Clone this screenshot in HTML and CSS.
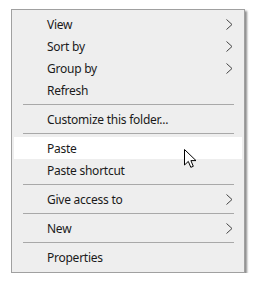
FILE: index.html
```html
<!DOCTYPE html>
<html lang="en">
<head>
    <meta charset="UTF-8">
    <title>Context menu</title>
    <link rel="stylesheet" href="styles.css">
</head>
<body>
    <div class="menu">
        <div class="item">View<svg class="chevron" width="7" height="11" viewBox="0 0 7 11"><polyline points="0.5,0.5 6,5.5 0.5,10.5"/></svg></div>
        <div class="item">Sort by<svg class="chevron" width="7" height="11" viewBox="0 0 7 11"><polyline points="0.5,0.5 6,5.5 0.5,10.5"/></svg></div>
        <div class="item">Group by<svg class="chevron" width="7" height="11" viewBox="0 0 7 11"><polyline points="0.5,0.5 6,5.5 0.5,10.5"/></svg></div>
        <div class="item">Refresh</div>
        <div class="sep"></div>
        <div class="item">Customize this folder...</div>
        <div class="sep"></div>
        <div class="item hover">Paste</div>
        <div class="item">Paste shortcut</div>
        <div class="sep"></div>
        <div class="item">Give access to<svg class="chevron" width="7" height="11" viewBox="0 0 7 11"><polyline points="0.5,0.5 6,5.5 0.5,10.5"/></svg></div>
        <div class="sep"></div>
        <div class="item">New<svg class="chevron" width="7" height="11" viewBox="0 0 7 11"><polyline points="0.5,0.5 6,5.5 0.5,10.5"/></svg></div>
        <div class="sep"></div>
        <div class="item">Properties</div>

        <!-- mouse pointer over "Paste" -->
        <svg class="cursor" width="14" height="20" viewBox="0 0 14 20">
            <path d="M0.5 0.5 L0.5 16 L4.3 12.4 L6.8 18.3 L9.3 17.3 L6.9 11.6 L12 11.6 Z"/>
        </svg>
    </div>
</body>
</html>
```

FILE: styles.css
```css
html, body {
    margin: 0;
    padding: 0;
    background: white;
}

body {
    padding: 9px 0 0 11px;
    font-family: "Noto Sans", "Open Sans", sans-serif;
    font-size: 12px;
    letter-spacing: -0.25px;
    color: #1a1a1a;
}

.menu {
    position: relative;
    box-sizing: border-box;
    width: 234px;
    padding: 3px 2px 4px 2px;
    background-color: #eeeeee;
    border: 1px solid #a0a0a0;
    box-shadow: 2px 2px 2px rgba(0, 0, 0, 0.45);
}

.item {
    display: flex;
    align-items: center;
    justify-content: space-between;
    height: 22px;
    padding: 0 9px 0 33px;
    white-space: nowrap;
}

.item.hover {
    background-color: white;
}

.chevron {
    display: block;
}

.chevron polyline {
    fill: none;
    stroke: #444;
    stroke-width: 1;
}

.sep {
    height: 7px;
    margin: 0 8px 0 9px;
    display: flex;
    align-items: center;
}

.sep::before {
    content: "";
    display: block;
    width: 100%;
    height: 1px;
    background-color: #a8a8a8;
}

.cursor {
    position: absolute;
    left: 172px;
    top: 139px;
}

.cursor path {
    fill: white;
    stroke: black;
    stroke-width: 1;
    stroke-linejoin: miter;
}
```
